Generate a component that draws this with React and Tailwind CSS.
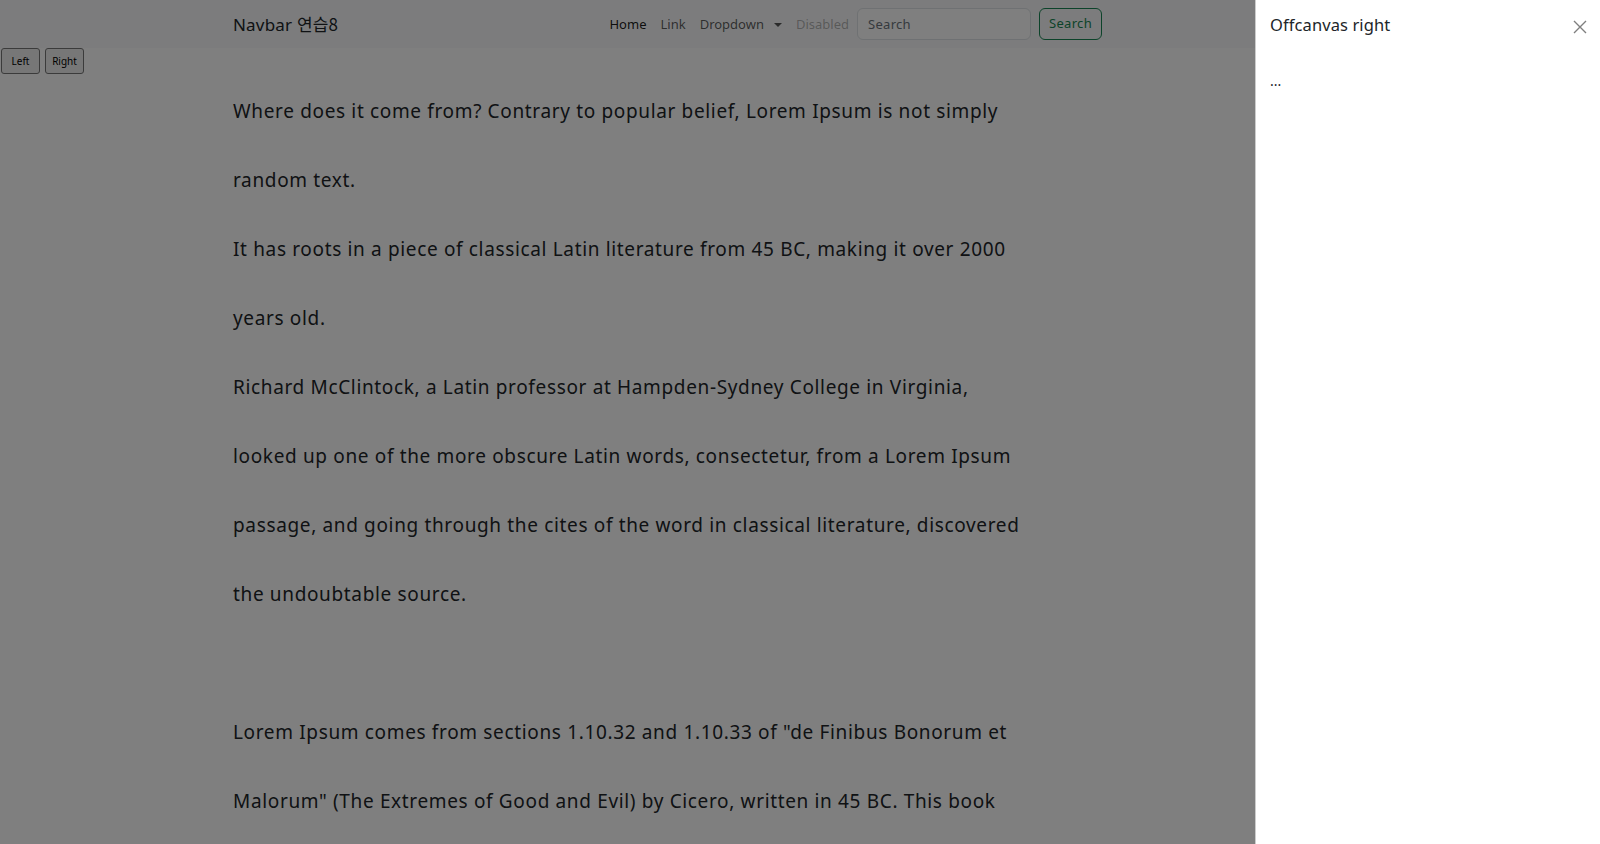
export default function App() {
  const lines = [
    'Where does it come from? Contrary to popular belief, Lorem Ipsum is not simply',
    'random text.',
    'It has roots in a piece of classical Latin literature from 45 BC, making it over 2000',
    'years old.',
    'Richard McClintock, a Latin professor at Hampden-Sydney College in Virginia,',
    'looked up one of the more obscure Latin words, consectetur, from a Lorem Ipsum',
    'passage, and going through the cites of the word in classical literature, discovered',
    'the undoubtable source.',
    '',
    'Lorem Ipsum comes from sections 1.10.32 and 1.10.33 of "de Finibus Bonorum et',
    'Malorum" (The Extremes of Good and Evil) by Cicero, written in 45 BC. This book',
  ]

  return (
    <div
      className="relative h-screen w-full overflow-hidden bg-white text-[#212529]"
      style={{ fontFamily: "'Noto Sans', 'Noto Sans CJK KR', sans-serif" }}
    >
      {/* navbar */}
      <nav className="h-12 bg-[#f8f9fa]">
        <div className="ml-[233px] flex h-full w-[869px] items-center">
          <a className="text-[17px] leading-none tracking-[0.2px] text-[#212529]">
            Navbar <span style={{ fontFamily: "'Noto Sans CJK KR', sans-serif" }}>연습8</span>
          </a>
          <ul className="ml-auto flex items-center gap-[14px] pt-[2px] text-[13px]">
            <li className="text-black/90">Home</li>
            <li className="text-black/65">Link</li>
            <li className="flex items-center gap-[10px] text-black/65">
              Dropdown
              <span className="h-0 w-0 border-x-[4px] border-t-[4px] border-x-transparent border-t-black/65" />
            </li>
            <li className="text-black/30">Disabled</li>
          </ul>
          <form className="ml-2 flex items-center gap-2">
            <input
              placeholder="Search"
              className="h-8 w-[174px] rounded-md border border-[#dee2e6] bg-white px-[10px] text-[13px] tracking-[0.3px] placeholder:text-[#6c757d] outline-none"
            />
            <button className="h-8 w-[63px] rounded-md border border-[#198754] text-[13px] tracking-[0.3px] text-[#198754]">
              Search
            </button>
          </form>
        </div>
      </nav>

      {/* left / right toggles */}
      <div className="flex gap-[5px] pl-px">
        <button className="h-[26px] w-[39px] rounded-[3px] border border-[#767676] bg-[#efefef] text-[10px] text-black">
          Left
        </button>
        <button className="h-[26px] w-[39px] rounded-[3px] border border-[#767676] bg-[#efefef] text-[10px] text-black">
          Right
        </button>
      </div>

      {/* article */}
      <div className="ml-[233px] mt-[3px] text-[19px] leading-[69px] tracking-[0.65px]">
        {lines.map((l, i) => (
          <div key={i} className="h-[69px] whitespace-nowrap">
            {l}
          </div>
        ))}
      </div>

      {/* backdrop */}
      <div className="fixed inset-0 bg-black/50" />

      {/* offcanvas */}
      <div className="fixed right-0 top-0 flex h-full w-[345px] flex-col border-l border-black/20 bg-white">
        <div className="flex items-center justify-between pl-[14px] pr-[10px] pt-[12px] pb-4">
          <h5 className="text-[16.5px] leading-[26px] tracking-[0.1px]">Offcanvas right</h5>
          <button className="mt-[4px] flex h-5 w-5 items-center justify-center">
            <svg width="14" height="14" viewBox="0 0 14 14" fill="none">
              <path d="M1 1L13 13M13 1L1 13" stroke="#000" strokeOpacity="0.5" strokeWidth="1.4" />
            </svg>
          </button>
        </div>
        <div className="pl-[14px] pt-[20px] text-[14px] leading-none">...</div>
      </div>
    </div>
  )
}
